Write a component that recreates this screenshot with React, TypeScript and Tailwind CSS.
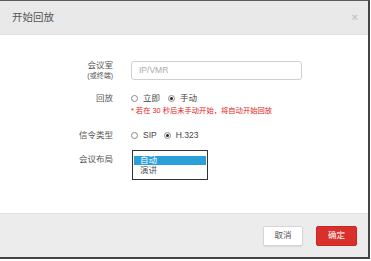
import React from 'react';

const cjk = "font-['Liberation_Sans','Noto_Sans_CJK_SC',sans-serif]";

function Radio({ checked, label }: { checked?: boolean; label: string }) {
  return (
    <div className="flex items-center">
      <span className="w-[7px] h-[7px] rounded-full border border-[#8a8a8a] bg-white flex items-center justify-center">
        {checked && <span className="w-[3px] h-[3px] rounded-full bg-[#222]" />}
      </span>
      <span className="ml-[5px] text-[8.5px] leading-[12px] text-[#444]">{label}</span>
    </div>
  );
}

export default function App() {
  return (
    <div className={`w-[371px] h-[261px] bg-white ${cjk}`}>
      <div className="w-[370px] h-[259px] flex flex-col border-t border-t-[#5a5a5a] border-r-2 border-r-[#444] border-b-2 border-b-[#444]">
        {/* Header */}
        <div className="h-[34px] shrink-0 bg-[#e9e9e9] border-b border-[#dedede] flex items-center justify-between pl-[12px] pr-[10px]">
          <h1 className="text-[10.5px] text-[#555]">开始回放</h1>
          <span className="text-[11px] font-bold leading-none text-[#c4c4c4]">×</span>
        </div>

        {/* Body */}
        <div className="flex-1 bg-white flex flex-col">
          {/* 会议室 */}
          <div className="flex items-start mt-[24px]">
            <div className="w-[113px] flex flex-col items-end">
              <span className="text-[8.5px] leading-[12px] text-[#555]">会议室</span>
              <span className="text-[7px] leading-[10px] text-[#555]">(或终端)</span>
            </div>
            <div className="ml-[18px] mt-[2px] w-[171px] h-[19px] border border-[#d0d0d0] rounded-[3px] flex items-center pl-[7px]">
              <span className="text-[8.5px] text-[#aaa]">IP/VMR</span>
            </div>
          </div>

          {/* 回放 */}
          <div className="flex items-start mt-[11px]">
            <div className="w-[113px] text-right text-[8.5px] leading-[12px] text-[#555]">回放</div>
            <div className="ml-[18px] flex flex-col">
              <div className="flex items-center gap-[8px]">
                <Radio label="立即" />
                <Radio checked label="手动" />
              </div>
              <div className="mt-[2px] text-[7.3px] leading-[10px] text-[#e31b1b]">* 若在 30 秒后未手动开始，将自动开始回放</div>
            </div>
          </div>

          {/* 信令类型 */}
          <div className="flex items-start mt-[13px]">
            <div className="w-[113px] text-right text-[8.5px] leading-[12px] text-[#555]">信令类型</div>
            <div className="ml-[18px] flex items-center gap-[7px]">
              <Radio label="SIP" />
              <Radio checked label="H.323" />
            </div>
          </div>

          {/* 会议布局 */}
          <div className="flex items-start mt-[9px]">
            <div className="w-[113px] mt-[3px] text-right text-[8.5px] leading-[12px] text-[#555]">会议布局</div>
            <div className="ml-[19px] w-[76px] h-[30px] border border-[#333] bg-white flex flex-col px-px pt-[5px]">
              <div className="h-[9px] bg-[#2a9fd8] text-white text-[8.5px] leading-[9px] pl-[6px]">自动</div>
              <div className="h-[10px] text-[#555] text-[8.5px] leading-[10px] pl-[6px]">演讲</div>
            </div>
          </div>
        </div>

        {/* Footer */}
        <div className="h-[44px] shrink-0 bg-[#ececec] border-t border-[#e2e2e2] flex items-center justify-end gap-[13px] pr-[11px]">
          <button className="w-[40px] h-[20px] bg-white border border-[#d6d6d6] rounded-[2px] shadow-[0_1px_1px_rgba(0,0,0,0.08)] text-[8.5px] text-[#555]">
            取消
          </button>
          <button className="w-[41px] h-[20px] bg-[#d9302c] border border-[#c42824] rounded-[2px] text-[8.5px] text-white">
            确定
          </button>
        </div>
      </div>
    </div>
  );
}
